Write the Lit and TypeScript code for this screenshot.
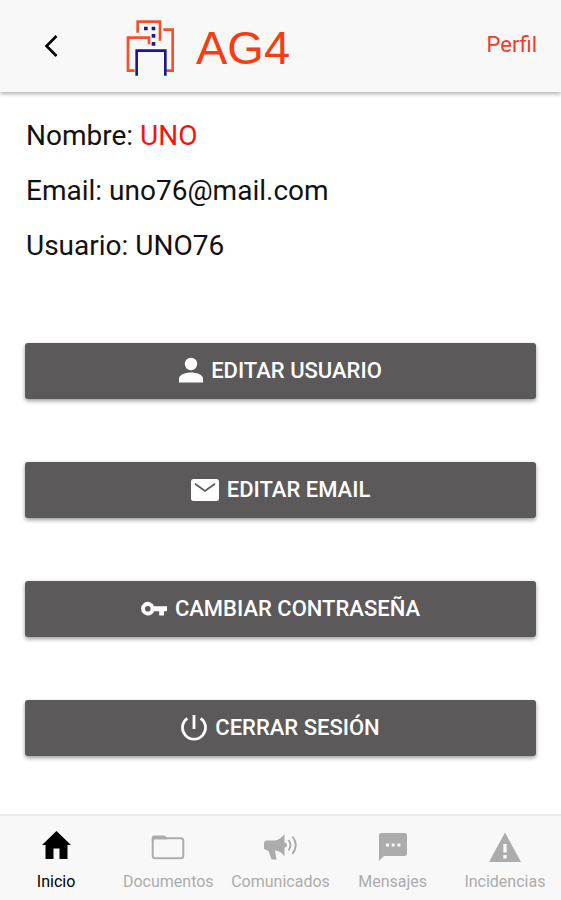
import { LitElement, html, css, svg, type SVGTemplateResult } from "lit";
import { customElement, state } from "lit/decorators.js";
import { classMap } from "lit/directives/class-map.js";

interface Action {
  label: string;
  icon: SVGTemplateResult;
}

interface Tab {
  label: string;
  icon: SVGTemplateResult;
}

const actions: Action[] = [
  {
    label: "Editar usuario",
    icon: svg`<svg width="24" height="28" viewBox="0 0 24 28" aria-hidden="true">
      <circle cx="12" cy="8" r="6.2" fill="currentColor"/>
      <path d="M0 26.500V22.500C0 18.500 7 16.500 12 16.500S24 18.500 24 22.500V26.500Z" fill="currentColor"/></svg>`,
  },
  {
    label: "Editar email",
    icon: svg`<svg width="28" height="28" viewBox="0 0 28 28" aria-hidden="true">
      <rect x="0" y="4" width="28" height="22" rx="2.500" fill="currentColor"/>
      <path d="M4 8.700L14 16L24 8.700" fill="none" stroke="#5b595a" stroke-width="1.800"/></svg>`,
  },
  {
    label: "Cambiar contraseña",
    icon: svg`<svg width="26" height="28" viewBox="0 0 26 28" aria-hidden="true">
      <path fill-rule="evenodd" fill="currentColor" d="M13.200 12.200A6.800 6.800 0 1 0 13.200 17.200H18.200V21.400H23V17.200H26V12.200ZM6.800 11.900A2.800 2.800 0 1 1 6.800 17.500A2.800 2.800 0 1 1 6.800 11.900Z"/></svg>`,
  },
  {
    label: "Cerrar sesión",
    icon: svg`<svg width="26" height="28" viewBox="0 0 26 28" fill="none" stroke="currentColor" stroke-width="2.800" aria-hidden="true">
      <path d="M6.300 5.300A11.500 11.500 0 1 0 19.700 5.300M13 2V16"/></svg>`,
  },
];

const tabs: Tab[] = [
  {
    label: "Inicio",
    icon: svg`<svg width="36" height="32" viewBox="0 0 36 32" aria-hidden="true">
      <path fill="currentColor" d="M18.500 1L33 15H29.500V29H21.500V18.500H15.500V29H7.500V15H4Z"/></svg>`,
  },
  {
    label: "Documentos",
    icon: svg`<svg width="36" height="32" viewBox="0 0 36 32" aria-hidden="true">
      <rect x="2.700" y="8.200" width="30.600" height="20" rx="2.500" fill="none" stroke="currentColor" stroke-width="2"/>
      <path fill="currentColor" d="M1.700 11V8Q1.700 5.500 4.200 5.500H13.500Q15.500 5.500 16.800 7.500L18 9.200H3.700V11Z"/></svg>`,
  },
  {
    label: "Comunicados",
    icon: svg`<svg width="36" height="32" viewBox="0 0 36 32" aria-hidden="true">
      <path fill="currentColor" d="M4 10.500H13C17 10 20 7 22.500 4V12.500A2.500 2.500 0 0 1 22.500 17.500V26.500C20 23 17 20.500 13 20.500L14.500 29.500H9.500L6.500 21L2 19V12.500Z"/>
      <path fill="none" stroke="currentColor" stroke-width="2" d="M26.500 10Q30.500 15 26.500 20.500M30.500 6.500Q37 15 30.500 24"/></svg>`,
  },
  {
    label: "Mensajes",
    icon: svg`<svg width="36" height="32" viewBox="0 0 36 32" aria-hidden="true">
      <path fill="currentColor" d="M6.500 3H29.500Q32 3 32 5.500V23.500Q32 26 29.500 26H9L4 31V5.500Q4 3 6.500 3Z"/>
      <path fill="#f8f8f8" d="M11 13.500h3v3h-3zM16.700 13.500h3v3h-3zM22.400 13.500h3v3h-3z"/></svg>`,
  },
  {
    label: "Incidencias",
    icon: svg`<svg width="36" height="32" viewBox="0 0 36 32" aria-hidden="true">
      <path fill="currentColor" d="M18 2.500L34 32H2Z"/>
      <path fill="#f8f8f8" d="M16.300 14h3.400v8.500h-3.400zM16.300 25h3.400v3.400h-3.400z"/></svg>`,
  },
];

@customElement("app-root")
export class AppRoot extends LitElement {
  @state() private active = "Inicio";

  static styles = css`
    :host {
      display: flex;
      flex-direction: column;
      min-height: 100vh;
      background: #fff;
      color: #111;
      font-family: Roboto, "Liberation Sans", sans-serif;
    }
    * {
      box-sizing: border-box;
    }
    button {
      border: 0;
      margin: 0;
      padding: 0;
      background: none;
      color: inherit;
      font: inherit;
      cursor: pointer;
    }
    svg {
      display: block;
      flex: none;
    }
    .header {
      display: flex;
      align-items: center;
      height: 92px;
      padding: 0 24px;
      background: #f8f8f8;
      box-shadow: 0 2px 4px rgba(0, 0, 0, 0.3);
    }
    .back {
      display: flex;
      align-items: center;
      justify-content: center;
      width: 54px;
      height: 48px;
    }
    .brand {
      display: flex;
      align-items: center;
      gap: 21px;
      margin: 4px 0 0 48px;
      color: #f63c10;
      font: 47px/56px "Liberation Sans", Arial, sans-serif;
    }
    .title {
      margin: 0 0 0 auto;
      padding-bottom: 2px;
      color: #f03c2a;
      font-size: 22px;
      font-weight: 400;
      line-height: 28px;
    }
    .content {
      flex: 1;
      padding: 28px 25px;
    }
    .profile {
      display: grid;
      gap: 23px;
      margin: 0 0 81px;
      padding-left: 1px;
      font-size: 28px;
      line-height: 32px;
    }
    .row {
      display: flex;
      gap: 7px;
    }
    .row dt,
    .row dd {
      margin: 0;
    }
    .name {
      color: #f8120c;
    }
    .actions {
      display: grid;
      gap: 63px;
    }
    .action {
      display: flex;
      align-items: center;
      justify-content: center;
      gap: 8px;
      height: 56px;
      padding-bottom: 2px;
      border-radius: 3px;
      background: #5b595a;
      box-shadow: 0 2px 4px rgba(0, 0, 0, 0.4);
      color: #fff;
      font-size: 22px;
      font-weight: 500;
      text-transform: uppercase;
    }
    .tabs {
      display: grid;
      grid-template-columns: repeat(5, 1fr);
      height: 86px;
      border-top: 2px solid #ebebeb;
      background: #f8f8f8;
    }
    .tab {
      display: flex;
      flex-direction: column;
      align-items: center;
      gap: 10px;
      padding-top: 14px;
      color: #acacac;
      font-size: 16px;
      line-height: 20px;
    }
    .active {
      color: #000;
    }
  `;

  render() {
    return html`
      <header class="header">
        <button class="back" aria-label="Volver">
          <svg width="14" height="24" viewBox="0 0 14 24" aria-hidden="true">
            <path d="M12.500 2L2.500 12L12.500 22" fill="none" stroke="#000" stroke-width="2.600"/>
          </svg>
        </button>
        <div class="brand">
          <svg width="49" height="56" viewBox="0 0 147 168" fill="none" stroke-width="8" aria-hidden="true">
            <path stroke="#f4502a" d="M35 38V5H102V62M69 73V53H6V152H26M112 29H140V152H120"/>
            <path stroke="#1a1a8c" stroke-width="8" d="M32 167V92H118V167"/>
            <path fill="#1a1a8c" d="M54 20h11v11h-11zM77 20h11v11h-11zM77 42h11v11h-11zM77 66h11v11h-11z"/>
          </svg>
          <span>AG4</span>
        </div>
        <h1 class="title">Perfil</h1>
      </header>
      <main class="content">
        <dl class="profile">
          <div class="row"><dt>Nombre:</dt><dd class="name">UNO</dd></div>
          <div class="row"><dt>Email:</dt><dd>uno76@mail.com</dd></div>
          <div class="row"><dt>Usuario:</dt><dd>UNO76</dd></div>
        </dl>
        <div class="actions">
          ${actions.map((a) => html`<button class="action">${a.icon}<span>${a.label}</span></button>`)}
        </div>
      </main>
      <nav class="tabs">
        ${tabs.map(
          (t) => html`<button
            class=${classMap({ tab: true, active: t.label === this.active })}
            @click=${() => (this.active = t.label)}
          >${t.icon}<span>${t.label}</span></button>`
        )}
      </nav>
    `;
  }
}
